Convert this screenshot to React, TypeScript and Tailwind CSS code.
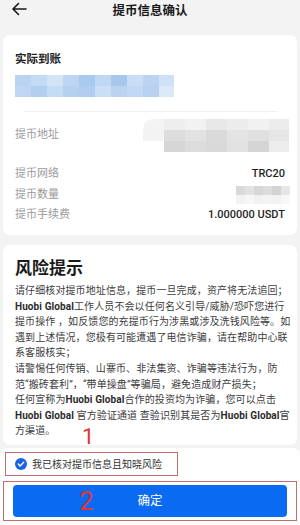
import React from 'react';

const font = { fontFamily: 'Roboto, "Noto Sans CJK SC", sans-serif' };

const blueTiles = [
  '#b9d3f1', '#c4dbf4', '#d3e4f7', '#bdd5f2', '#a9c9ee', '#c1d8f3', '#a7c7ed', '#c9ddf5', '#bcd4f2', '#cfe1f6',
  '#bfd6f2', '#b3cff0', '#c6dbf4', '#b5d0f1', '#b0ccef', '#cadff5', '#bad3f1', '#c3d9f3', '#b7d1f0', '#dbe8f8',
];

const grayTiles = [
  '#f4f4f4', '#eeeeee', '#f2f2f2', '#e8e8e8', '#ececec', '#f1f1f1', '#ebebeb',
  '#f3f3f3', '#dddddd', '#e2e2e2', '#dadada', '#e4e4e4', '#e0e0e0', '#e6e6e6',
  '#ffffff', '#d6d6d6', '#dcdcdc', '#d9d9d9', '#e1e1e1', '#d5d5d5', '#ededed',
];

const amountTiles = [
  '#d9d9d9', '#e2e2e2', '#d6d6d6', '#dcdcdc', '#d3d3d3', '#e6e6e6',
  '#f3f3f3', '#f6f6f6', '#f1f1f1', '#f4f4f4', '#f2f2f2', '#f7f7f7',
];

function HB({ children }: { children: React.ReactNode }) {
  return <span className="font-bold text-[#2b2b2b]">{children}</span>;
}

const lines: React.ReactNode[] = [
  <>请仔细核对提币地址信息，提币一旦完成，资产将无法追回；</>,
  <><HB>Huobi Global</HB>工作人员不会以任何名义引导/威胁/恐吓您进行</>,
  <>提币操作 ，如反馈您的充提币行为涉黑或涉及洗钱风险等。如</>,
  <>遇到上述情况，您极有可能遭遇了电信诈骗，请在帮助中心联</>,
  <>系客服核实；</>,
  <>请警惕任何传销、山寨币、非法集资、诈骗等违法行为，防</>,
  <>范“搬砖套利”，“带单操盘”等骗局，避免造成财产损失；</>,
  <>任何宣称为<HB>Huobi Global</HB>合作的投资均为诈骗，您可以点击</>,
  <><HB>Huobi Global</HB> 官方验证通道 查验识别其是否为<HB>Huobi Global</HB>官</>,
  <>方渠道。</>,
];

function Row({ label, children }: { label: string; children?: React.ReactNode }) {
  return (
    <div className="flex items-center justify-between h-[20.5px]">
      <span className="text-[11px] text-[#9a9a9a]">{label}</span>
      {children}
    </div>
  );
}

export default function App() {
  return (
    <div className="w-[300px] h-[525px] bg-[#f3f3f3] flex flex-col overflow-hidden relative" style={font}>
      {/* Header */}
      <div className="h-[35px] flex items-center relative shrink-0">
        <svg className="absolute left-[11px] top-[2px]" width="16" height="14" viewBox="0 0 16 14" fill="none">
          <path d="M15 7H2M7.5 1.5L2 7l5.5 5.5" stroke="#1a1a1a" strokeWidth="1.6" strokeLinecap="round" strokeLinejoin="round" />
        </svg>
        <div className="w-full text-center text-[12.5px] font-bold text-[#1a1a1a] -mt-[13px]">提币信息确认</div>
      </div>

      {/* Amount card */}
      <div className="mx-[3px] h-[200px] bg-white rounded-[7px] px-[12px] pt-[17px] shrink-0">
        <div className="text-[11.5px] font-bold text-[#222] leading-[14px]">实际到账</div>
        <div className="mt-[9px] grid grid-cols-[repeat(10,16px)] w-[159px] h-[22px] overflow-hidden">
          {blueTiles.map((c, i) => (
            <div key={i} className="h-[11px]" style={{ background: c }} />
          ))}
        </div>
        <div className="mt-[14px] mx-[8px] h-px bg-[#f0f0f0]" />
        <div className="mt-[7px] flex items-center justify-between">
          <span className="text-[11px] text-[#9a9a9a]">提币地址</span>
          <div className="grid grid-cols-[repeat(7,21px)] w-[146px] h-[33px] rounded-l-[10px] overflow-hidden -mr-[4px]">
            {grayTiles.map((c, i) => (
              <div key={i} className="h-[11px]" style={{ background: c }} />
            ))}
          </div>
        </div>
        <div className="mt-[12px]">
          <Row label="提币网络">
            <span className="text-[11px] font-medium text-[#1f1f1f]">TRC20</span>
          </Row>
          <Row label="提币数量">
            <div className="grid grid-cols-[repeat(6,9px)] w-[53px] h-[18px] -mr-[4px]">
              {amountTiles.map((c, i) => (
                <div key={i} className="h-[9px]" style={{ background: c }} />
              ))}
            </div>
          </Row>
          <Row label="提币手续费">
            <span className="text-[11px] font-medium text-[#1f1f1f]">1.000000 USDT</span>
          </Row>
        </div>
      </div>

      {/* Risk card */}
      <div className="mx-[3px] mt-[10px] h-[200px] bg-white rounded-[7px] px-[12px] pt-[12px] shrink-0">
        <div className="text-[17px] font-bold text-[#1a1a1a] leading-[22px]">风险提示</div>
        <div className="mt-[4px] text-[10px] leading-[15.6px] text-[#3c3c3c] tracking-[0.1px]">
          {lines.map((l, i) => (
            <div key={i} className="whitespace-nowrap">{l}</div>
          ))}
        </div>
      </div>

      {/* Bottom bar */}
      <div className="mt-[3px] flex-1 bg-white rounded-t-[7px] px-[3px] pt-[4px] flex flex-col">
        <div className="ml-[2px] w-[173px] h-[24px] border border-[#c86b6b] flex items-center pl-[9px] gap-[5px]">
          <svg width="12" height="12" viewBox="0 0 12 12">
            <circle cx="6" cy="6" r="6" fill="#1a63e0" />
            <path d="M3.3 6.1l1.8 1.8 3.6-3.6" stroke="#fff" strokeWidth="1.4" fill="none" strokeLinecap="round" strokeLinejoin="round" />
          </svg>
          <span className="text-[10px] text-[#333]">我已核对提币信息且知晓风险</span>
        </div>
        <div className="mt-[5px] h-[40px] border border-[#c86b6b] px-[9px] py-[3px]">
          <button className="w-full h-full bg-[#0a6af2] rounded-[4px] text-white text-[12.5px]">确定</button>
        </div>
      </div>

      {/* red annotations */}
      <div className="absolute left-[82px] top-[426px] text-[22px] leading-[22px] text-[#e03535]" style={{ fontFamily: 'Roboto, sans-serif' }}>1</div>
      <div className="absolute left-[79px] top-[488px] text-[26px] leading-[26px] text-[#e03535]" style={{ fontFamily: 'Roboto, sans-serif' }}>2</div>
    </div>
  );
}
